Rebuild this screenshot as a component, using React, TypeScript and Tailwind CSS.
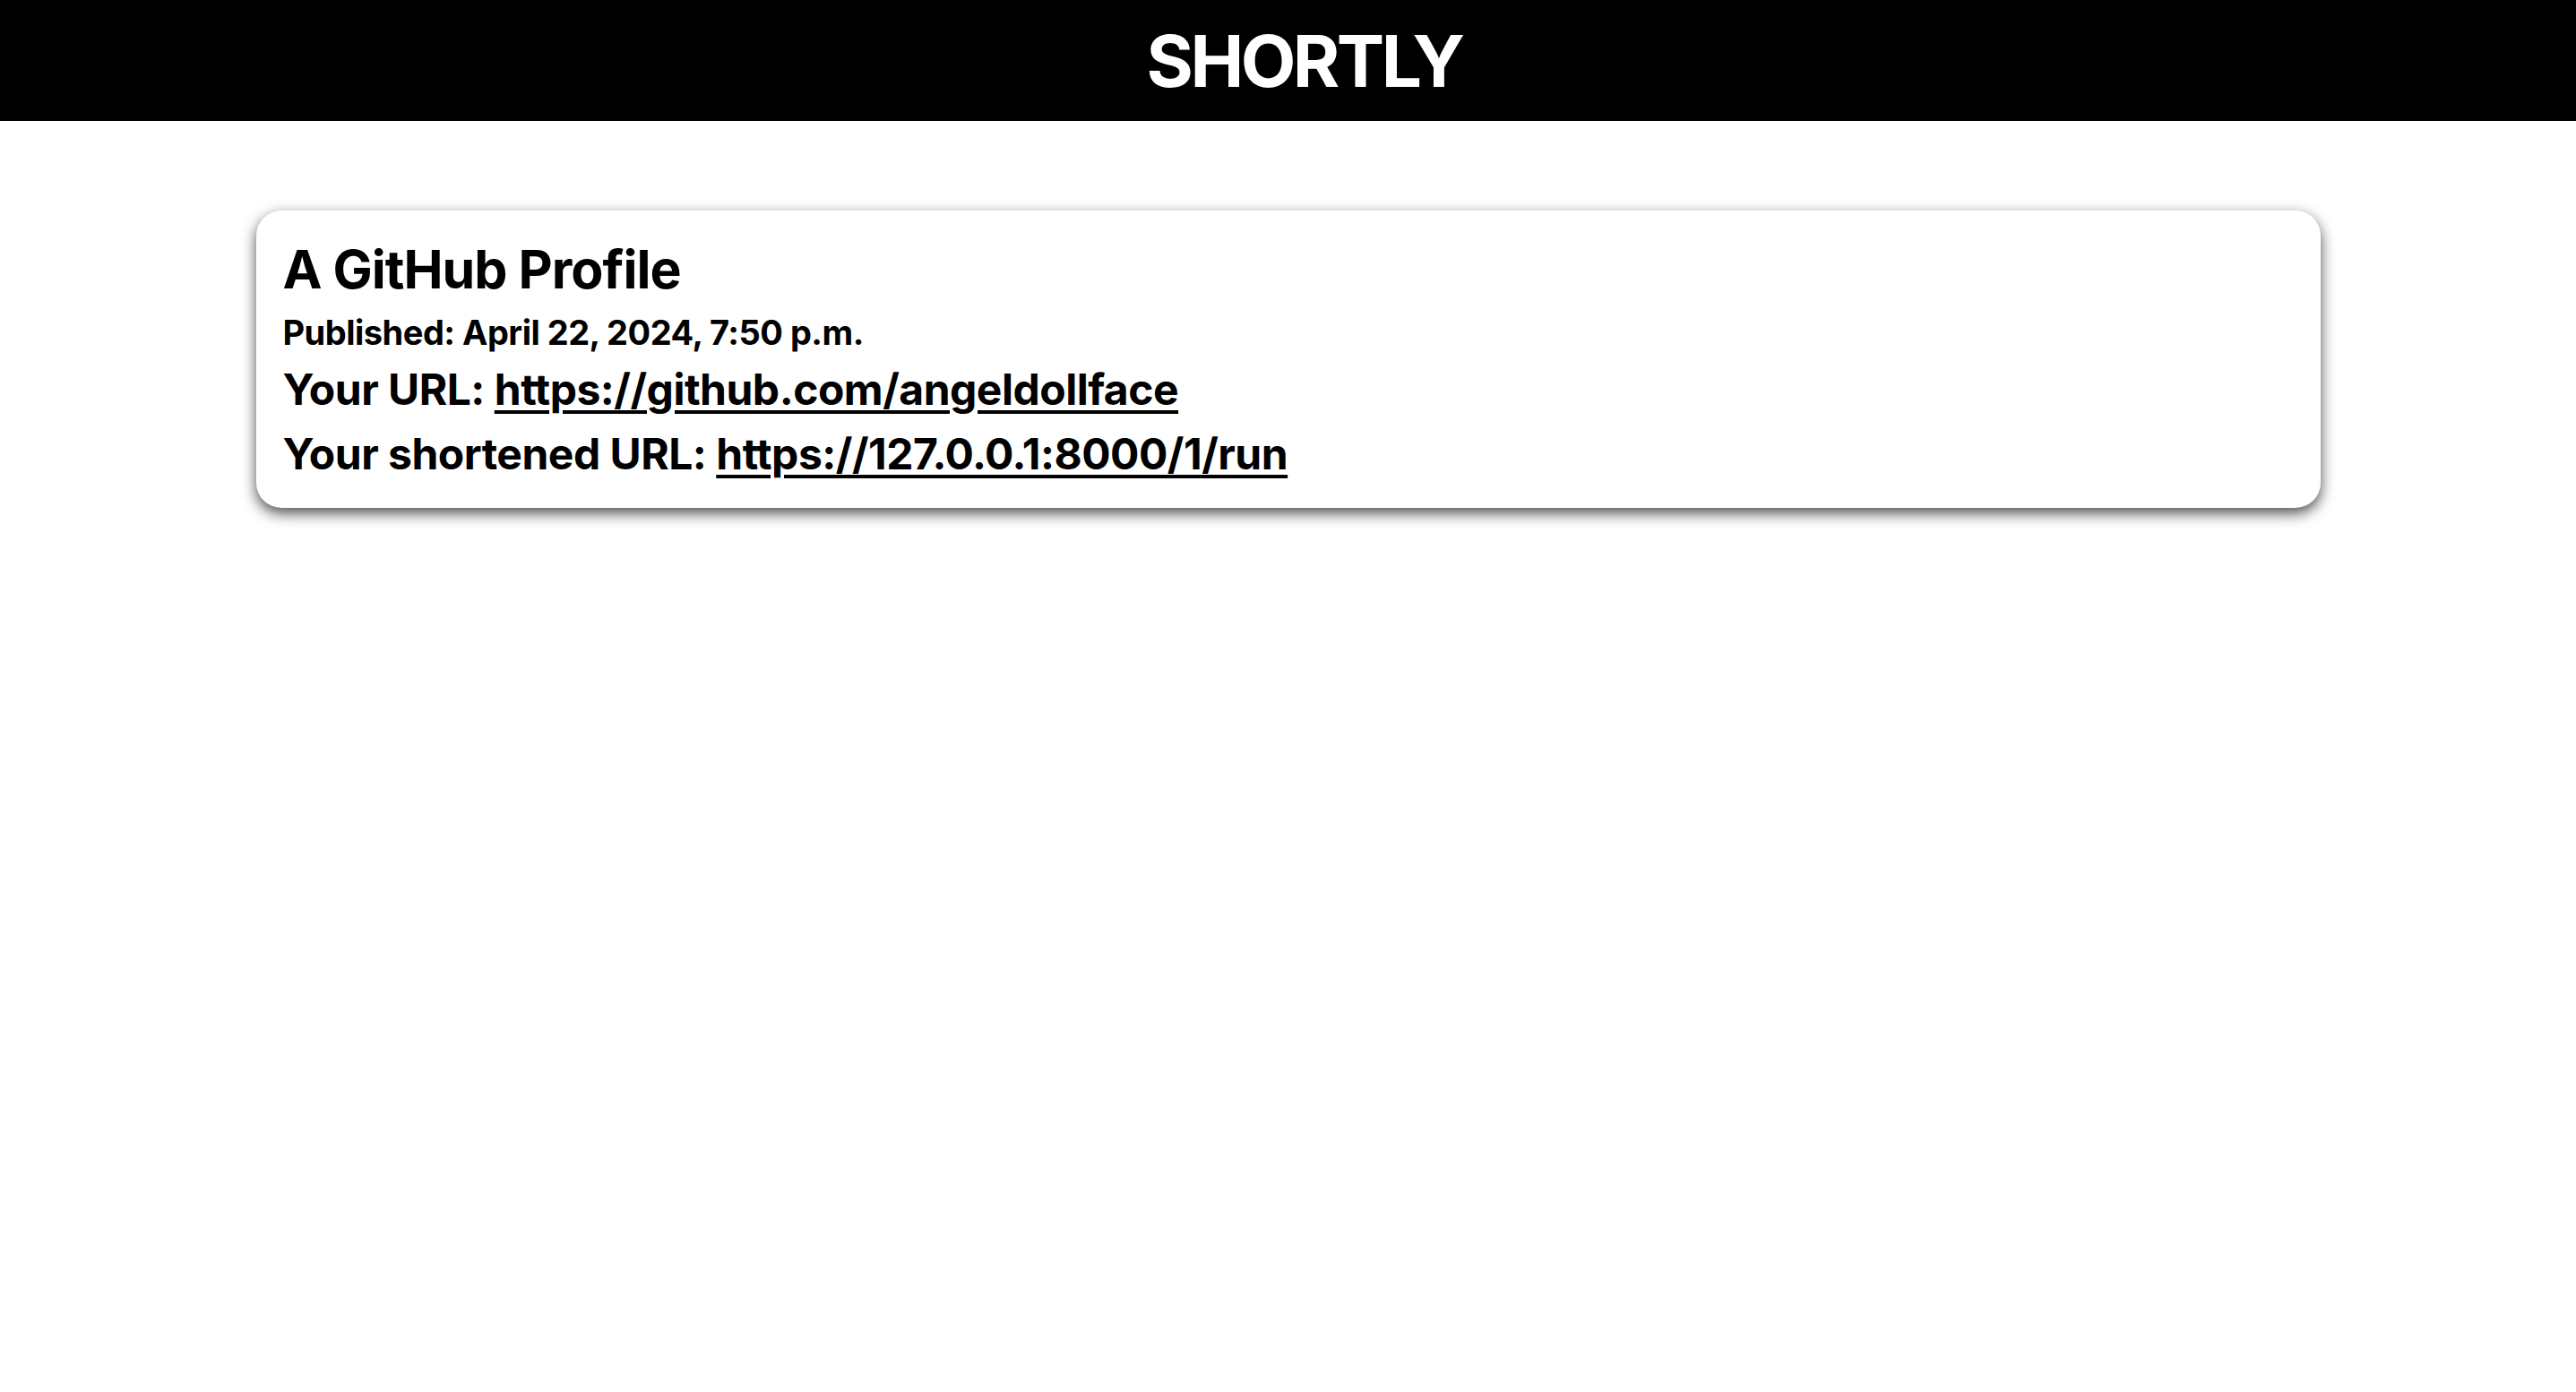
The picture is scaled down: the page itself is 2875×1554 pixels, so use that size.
import React from "react";

const font = { fontFamily: "Inter, 'Open Sans', sans-serif" };

const links = [
  { label: "Your URL:", href: "https://github.com/angeldollface", mt: "mt-[14px]" },
  { label: "Your shortened URL:", href: "https://127.0.0.1:8000/1/run", mt: "mt-[16px]" },
];

export default function App() {
  return (
    <div className="min-h-screen bg-white text-black" style={font}>
      <header className="h-[135px] bg-black flex items-center justify-center pl-[36px]">
        <h1 className="text-[80px] leading-none font-bold text-white tracking-[-3.5px]">
          SHORTLY
        </h1>
      </header>

      <main className="pt-[100px]">
        <div className="w-[2304px] mx-auto bg-white rounded-[28px] shadow-[0_6px_16px_rgba(0,0,0,0.7)] pl-[30px] pt-[34px] pb-[32px]">
          <h2 className="text-[59px] leading-[64px] font-bold tracking-[-1px]">
            A GitHub Profile
          </h2>
          <p className="mt-[16px] text-[38px] leading-[44px] font-bold tracking-[-0.5px]">
            Published: April 22, 2024, 7:50 p.m.
          </p>
          {links.map((l) => (
            <p
              key={l.href}
              className={`${l.mt} text-[48px] leading-[56px] font-bold tracking-[-0.5px]`}
            >
              {l.label}{" "}
              <a
                href={l.href}
                className="underline decoration-[4px] underline-offset-[6px]"
              >
                {l.href}
              </a>
            </p>
          ))}
        </div>
      </main>
    </div>
  );
}
